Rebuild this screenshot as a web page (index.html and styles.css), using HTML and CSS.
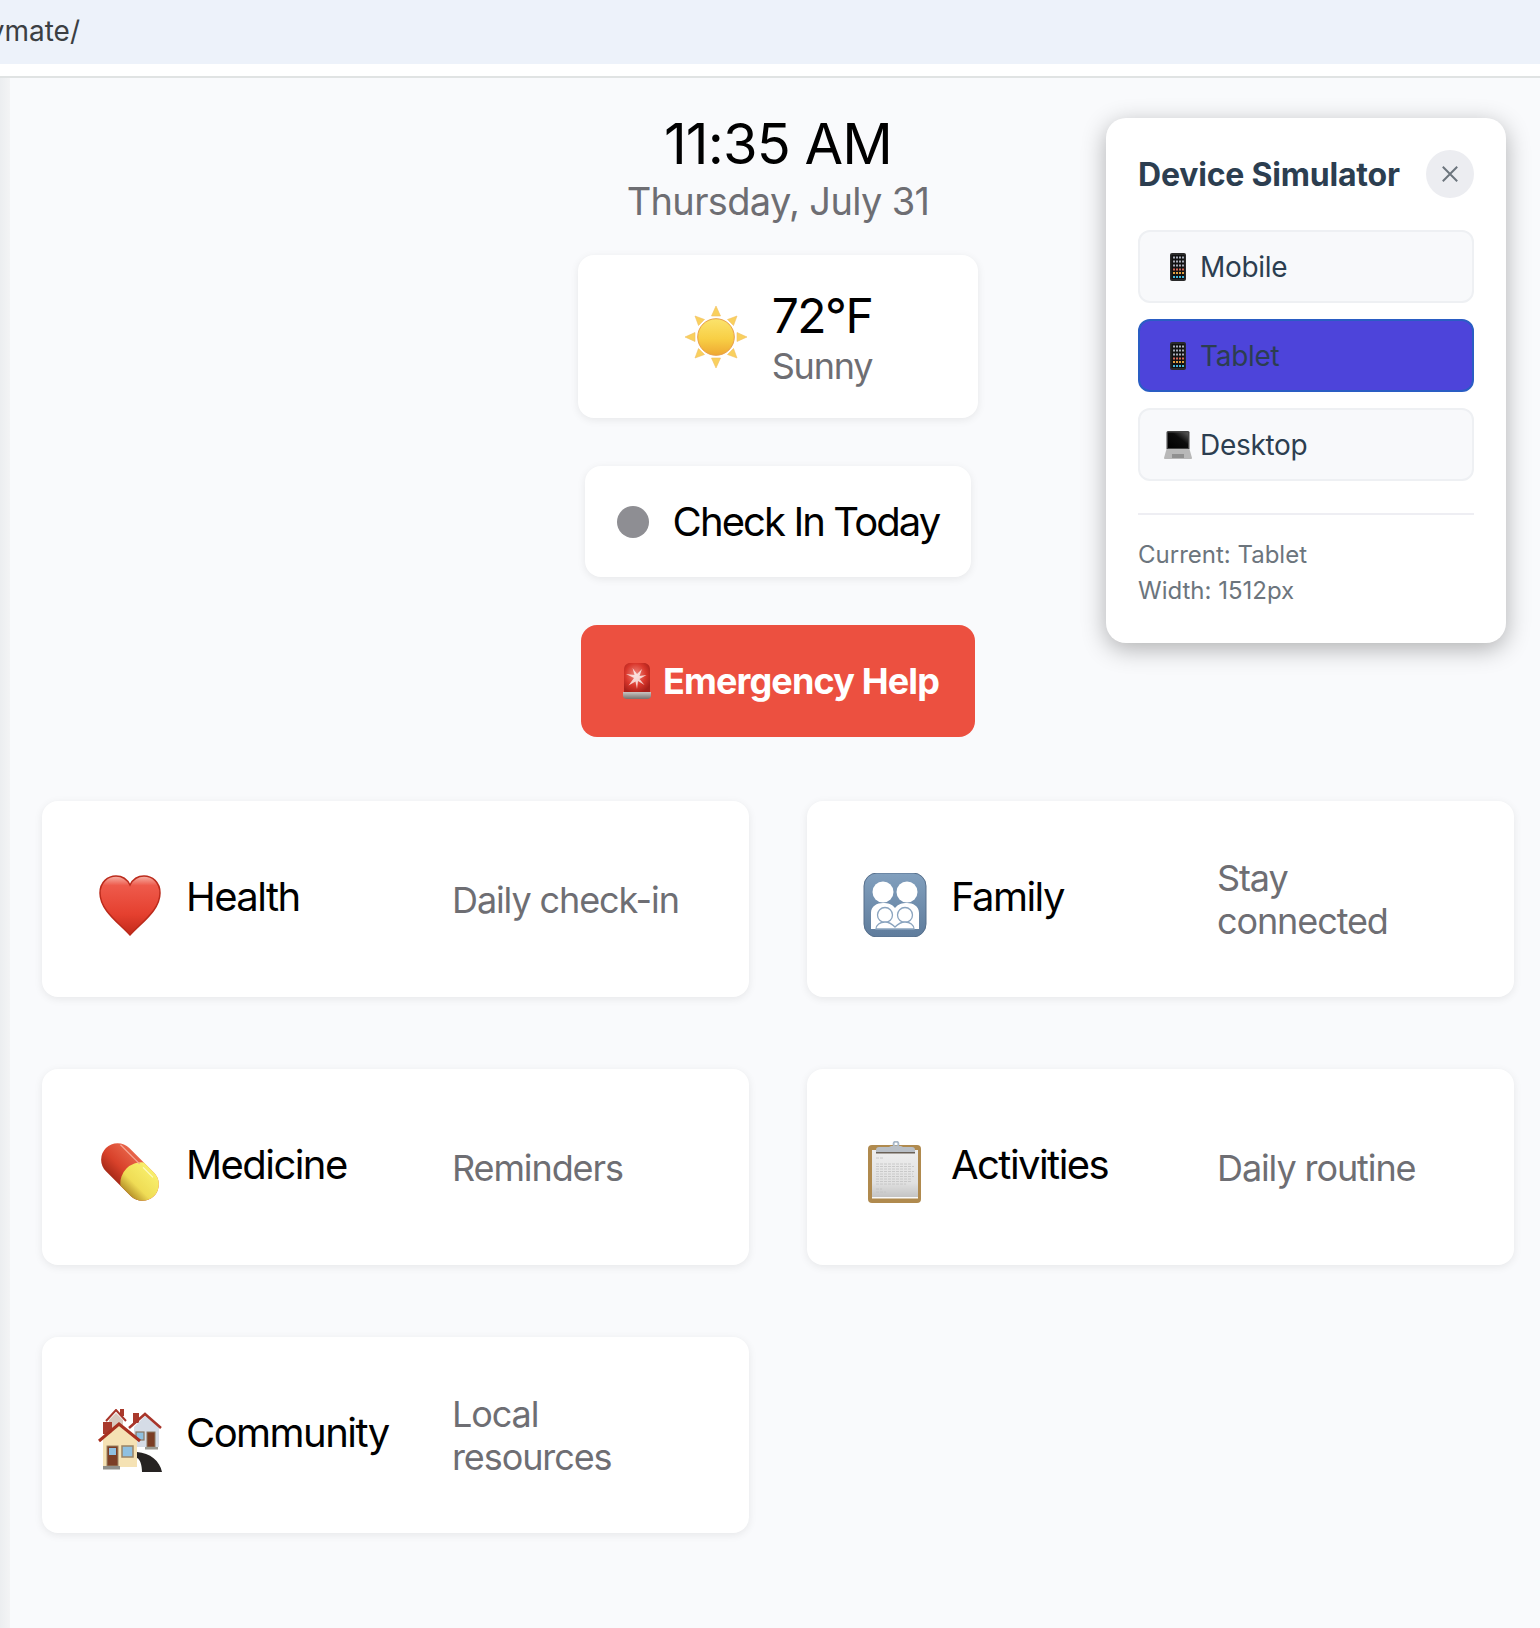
FILE: index.html
```html
<!DOCTYPE html>
<html lang="en">
<head>
  <meta charset="UTF-8" />
  <title>Buddymate</title>
  <link rel="stylesheet" href="styles.css">
</head>
<body>
  <div class="url-bar">
    <div class="url-clip"><span>buddymate/</span></div>
  </div>
  <div class="url-gap"></div>

  <div class="page">
    <div class="side-strip"></div>
    <main>
      <section class="top">
        <div class="time">11:35 AM</div>
        <div class="date">Thursday, July 31</div>

        <div class="weather">
          <svg class="sun" viewBox="0 0 64 64">
            <defs>
              <linearGradient id="sunFill" x1="0" y1="0" x2="0" y2="1">
                <stop offset="0" stop-color="#fbe36c"/>
                <stop offset=".55" stop-color="#f8cf45"/>
                <stop offset="1" stop-color="#eea832"/>
              </linearGradient>
            </defs>
            <g fill="#f9d05e" stroke="#f2bf62" stroke-width=".6">
              <path d="M32 1l4.500 10h-9z"/>
              <path d="M32 63l-4.500-10h9z"/>
              <path d="M1 32l10-4.500v9z"/>
              <path d="M63 32l-10 4.500v-9z"/>
              <path d="M11 11l9.500 3.500-6 6z"/>
              <path d="M53 11l-3.500 9.500-6-6z"/>
              <path d="M11 53l3.500-9.500 6 6z"/>
              <path d="M53 53l-9.500-3.500 6-6z"/>
            </g>
            <circle cx="32" cy="32" r="20" fill="#fff"/>
            <circle cx="32" cy="32" r="18.300" fill="url(#sunFill)" stroke="#e8a04a" stroke-width="1"/>
          </svg>
          <div class="weather-text">
            <div class="temp">72°F</div>
            <div class="sky">Sunny</div>
          </div>
        </div>

        <button class="checkin"><span class="dot"></span>Check In Today</button>

        <button class="emergency">
          <svg class="siren" viewBox="0 0 40 40">
            <defs>
              <radialGradient id="sirenFill" cx="45%" cy="40%" r="65%">
                <stop offset="0" stop-color="#f08a80"/>
                <stop offset=".6" stop-color="#d9362b"/>
                <stop offset="1" stop-color="#a8201a"/>
              </radialGradient>
              <linearGradient id="sirenBase" x1="0" y1="0" x2="0" y2="1">
                <stop offset="0" stop-color="#c9c5c2"/>
                <stop offset="1" stop-color="#77716e"/>
              </linearGradient>
            </defs>
            <path d="M7 31V9c0-5 3-7 6-7h14c3 0 6 2 6 7v22z" fill="url(#sirenFill)"/>
            <path d="M6 31h28v4c0 2-2 3-4 3H10c-2 0-4-1-4-3z" fill="url(#sirenBase)"/>
            <path d="M17 17l-8-4 8.500 1-2-7 4.500 6 5-5-2.500 7 7-1-7 4 5 6-6.500-4-1 8-1.500-7.500-7 4z" fill="#fff" opacity=".75"/>
          </svg>
          <span>Emergency Help</span>
        </button>
      </section>

      <section class="tiles">
        <a class="tile">
          <svg class="tile-icon" viewBox="0 0 64 64">
            <defs>
              <linearGradient id="heartFill" x1="0" y1="0" x2="0" y2="1">
                <stop offset="0" stop-color="#f6b3a8"/>
                <stop offset=".16" stop-color="#ee5a4b"/>
                <stop offset=".65" stop-color="#e5402f"/>
                <stop offset="1" stop-color="#c22a1a"/>
              </linearGradient>
            </defs>
            <path d="M32 62C20 49 2 37 2 20 2 9 10 3 18 3c6 0 11 3 14 9 3-6 8-9 14-9 8 0 16 6 16 17 0 17-18 29-30 42z" fill="url(#heartFill)" stroke="#bb2a1b" stroke-width="1.500"/>
          </svg>
          <span class="tile-name">Health</span>
          <span class="tile-sub">Daily check-in</span>
        </a>

        <a class="tile">
          <svg class="tile-icon" viewBox="0 0 64 64">
            <defs>
              <linearGradient id="famFill" x1="0" y1="0" x2="0" y2="1">
                <stop offset="0" stop-color="#82a0be"/>
                <stop offset="1" stop-color="#5f7c9c"/>
              </linearGradient>
            </defs>
            <rect x="1" y="0" width="62" height="64" rx="13" fill="url(#famFill)" stroke="#566f8b"/>
            <g fill="#fff">
              <circle cx="20" cy="19" r="10.500"/>
              <circle cx="44" cy="19" r="10.500"/>
              <path d="M8 56V40c0-7 6-10 12-10 5 0 9 1 12 5 3-4 7-5 12-5 6 0 12 3 12 10v16z"/>
            </g>
            <g fill="#fff" stroke="#8aa4bf" stroke-width="1.300">
              <circle cx="22" cy="42" r="7.500"/>
              <circle cx="42" cy="42" r="7.500"/>
              <path d="M13 56c0-4 4-7 9-7 4 0 7 2 10 5 3-3 6-5 10-5 5 0 9 3 9 7z"/>
            </g>
          </svg>
          <span class="tile-name">Family</span>
          <span class="tile-sub">Stay connected</span>
        </a>

        <a class="tile">
          <svg class="tile-icon" viewBox="0 0 64 64">
            <defs>
              <linearGradient id="pillRed" x1="0" y1="0" x2="0" y2="1">
                <stop offset="0" stop-color="#e8654a"/>
                <stop offset=".6" stop-color="#d8412a"/>
                <stop offset="1" stop-color="#a82a18"/>
              </linearGradient>
              <linearGradient id="pillYellow" x1="0" y1="0" x2="0" y2="1">
                <stop offset="0" stop-color="#f8ef6c"/>
                <stop offset=".65" stop-color="#efdc55"/>
                <stop offset="1" stop-color="#b8932a"/>
              </linearGradient>
            </defs>
            <g transform="rotate(45 32 31)">
              <rect x="-2" y="14.500" width="68" height="33" rx="16.500" fill="url(#pillRed)"/>
              <path d="M35 14.500h14.500a16.500 16.500 0 0 1 0 33H35a21 21 0 0 1 0-33z" fill="url(#pillYellow)"/>
              <path d="M6 18.500h27" stroke="#f6a798" stroke-width="1.200" fill="none"/>
              <path d="M38 18.500h14" stroke="#fdfbc8" stroke-width="1.200" fill="none"/>
            </g>
          </svg>
          <span class="tile-name">Medicine</span>
          <span class="tile-sub">Reminders</span>
        </a>

        <a class="tile">
          <svg class="tile-icon" viewBox="0 0 64 64">
            <defs>
              <linearGradient id="paper" x1="0" y1="0" x2="0" y2="1">
                <stop offset="0" stop-color="#eeeeee"/>
                <stop offset=".7" stop-color="#e0e0e0"/>
                <stop offset="1" stop-color="#c4c4c4"/>
              </linearGradient>
            </defs>
            <rect x="5" y="4" width="53" height="58" rx="4" fill="#b08a4e"/>
            <rect x="9" y="9" width="46" height="47" fill="url(#paper)"/>
            <rect x="9" y="56" width="46" height="1.500" fill="#fafafa"/>
            <g stroke="#c2c2c2" stroke-width=".8" stroke-dasharray="3 1" fill="none">
              <path d="M13 17h7M13 23h36M13 25.500h38M13 28h36M13 30.500h38M13 33h37M13 35.500h38M13 38h36M13 40.500h35M13 43h30M13 48h6M13 51h10"/>
            </g>
            <circle cx="33" cy="3" r="2.500" fill="none" stroke="#a9b8c8" stroke-width="1.800"/>
            <path d="M28 5h10l2 1h9c2 0 3 1 3 3v2H13V9c0-2 1-3 3-3h10z" fill="#b9bfc6"/>
            <rect x="13" y="11" width="39" height="1.500" fill="#6a6157"/>
          </svg>
          <span class="tile-name">Activities</span>
          <span class="tile-sub">Daily routine</span>
        </a>

        <a class="tile">
          <svg class="tile-icon" viewBox="0 0 64 64">
            <!-- back house -->
            <rect x="22" y="0" width="4" height="7" fill="#a93a2c"/>
            <path d="M11 11L18 4l7 7v9H11z" fill="#d8c8be"/>
            <path d="M8 12L18 1l10 11" fill="none" stroke="#a8352a" stroke-width="2"/>
            <!-- right house -->
            <rect x="35" y="4" width="6" height="10" fill="#a93a2c"/>
            <path d="M36 18L47 7l14 11v20H36z" fill="#d5dce6"/>
            <path d="M31 19L47 5l16 14" fill="none" stroke="#a8352a" stroke-width="2.500"/>
            <rect x="38" y="23" width="8" height="8" fill="#8fc0e0" stroke="#8b7862" stroke-width="1.200"/>
            <rect x="49" y="23" width="8" height="15" fill="#7b3e25" stroke="#8b7862" stroke-width="1"/>
            <rect x="47" y="38" width="13" height="2.500" fill="#9a9a92"/>
            <!-- road -->
            <path d="M39 43c13 1 23 9 25 20H44c0-7-2-13-5-14z" fill="#262322"/>
            <!-- front house -->
            <rect x="5" y="13" width="9" height="12" fill="#a93a2c"/>
            <path d="M5 30L21 17l18 13v28H5z" fill="#f5e2b4"/>
            <path d="M1 32L21 15l21 17" fill="none" stroke="#a8301f" stroke-width="3"/>
            <rect x="9" y="37" width="11" height="20" fill="#7b3e25" stroke="#9b8464" stroke-width="1"/>
            <rect x="11" y="39" width="7" height="7" fill="#8fc0e0"/>
            <rect x="24" y="37" width="11" height="11" fill="#8fc0e0" stroke="#9b8464" stroke-width="1.500"/>
            <rect x="5" y="57" width="17" height="3.500" fill="#8f8f8a"/>
          </svg>
          <span class="tile-name">Community</span>
          <span class="tile-sub">Local resources</span>
        </a>
      </section>
    </main>

    <aside class="simulator">
      <div class="sim-head">
        <h3>Device Simulator</h3>
        <button class="sim-close">
          <svg viewBox="0 0 20 20"><path d="M2 2l16 16M18 2L2 18" stroke="#6c757d" stroke-width="2.200" fill="none"/></svg>
        </button>
      </div>
      <div class="sim-list">
        <button class="sim-btn">
          <svg class="sim-icon" viewBox="0 0 28 28">
            <rect x="6" y="0" width="16" height="28" rx="2" fill="#2a2a2a"/>
            <rect x="7.500" y="2" width="13" height="24" fill="#111"/>
            <path d="M9 4.500h11M9 8.500h11M9 12.500h11" stroke="#a8acb8" stroke-width="2" stroke-dasharray="2 1"/>
            <path d="M9 16.500h11" stroke="#d86a5a" stroke-width="2" stroke-dasharray="2 1"/>
            <path d="M9 20h11" stroke="#e0a040" stroke-width="2" stroke-dasharray="2 1"/>
            <path d="M9 24h11" stroke="#46b8d8" stroke-width="2" stroke-dasharray="2 1"/>
          </svg>
          Mobile
        </button>
        <button class="sim-btn active">
          <svg class="sim-icon" viewBox="0 0 28 28">
            <rect x="6" y="0" width="16" height="28" rx="2" fill="#2a2a2a"/>
            <rect x="7.500" y="2" width="13" height="24" fill="#111"/>
            <path d="M9 4.500h11M9 8.500h11M9 12.500h11" stroke="#a8acb8" stroke-width="2" stroke-dasharray="2 1"/>
            <path d="M9 16.500h11" stroke="#d86a5a" stroke-width="2" stroke-dasharray="2 1"/>
            <path d="M9 20h11" stroke="#e0a040" stroke-width="2" stroke-dasharray="2 1"/>
            <path d="M9 24h11" stroke="#46b8d8" stroke-width="2" stroke-dasharray="2 1"/>
          </svg>
          Tablet
        </button>
        <button class="sim-btn">
          <svg class="sim-icon" viewBox="0 0 28 28">
            <defs>
              <linearGradient id="lapScreen" x1="0" y1="1" x2="1" y2="0">
                <stop offset="0" stop-color="#000"/>
                <stop offset=".6" stop-color="#0c0c0c"/>
                <stop offset="1" stop-color="#5a5a5a"/>
              </linearGradient>
            </defs>
            <path d="M4 0h20c1 0 1.500 1 1.500 1.500V18h-23V1.500C2.500 1 3 0 4 0z" fill="#444"/>
            <path d="M4 1.500h20V17H4z" fill="url(#lapScreen)"/>
            <path d="M2.500 18h23L28 27c0 .5-.5 1-1 1H1c-.5 0-1-.5-1-1z" fill="#b8b8b8"/>
            <rect x="8" y="23" width="12" height="4" fill="#909090"/>
          </svg>
          Desktop
        </button>
      </div>
      <div class="sim-info">
        <div>Current: Tablet</div>
        <div>Width: 1512px</div>
      </div>
    </aside>
  </div>
</body>
</html>
```

FILE: styles.css
```css
* { box-sizing: border-box; }
:root {
  --text-grey: #6e6e73;
  --card-shadow: 0 2px 8px rgba(0,0,0,0.08);
}
html, body { height: 100%; }
body {
  margin: 0; overflow: hidden;
  font-family: Inter, "Liberation Sans", sans-serif;
  background: #f9fafc; color: #000;
}
button { font-family: inherit; cursor: pointer; }

/* browser chrome left over at the top */
.url-bar {
  height: 64px; background: #edf2fa; padding-bottom: 2px;
  display: flex; align-items: center;
}
.url-clip {
  width: 80px; overflow: hidden; display: flex; justify-content: flex-end;
  white-space: nowrap; color: #3c3f43; font-size: 28px;
}
.url-gap {
  height: 14px; background: #fff;
  border-bottom: 2px solid #e0e3e3;
}

.page { position: relative; display: flex; height: 1550px; }
.side-strip {
  flex: 0 0 10px;
  background: linear-gradient(to right, #eceef0, #f3f4f5);
}
main { flex: 0 0 1536px; padding: 33px 32px 32px; }

.top { display: flex; flex-direction: column; align-items: center; }
.time { font-size: 56px; line-height: 66px; letter-spacing: -0.9px; }
.date { font-size: 38px; line-height: 48px; letter-spacing: -0.65px; color: var(--text-grey); margin-bottom: 30px; }

.weather {
  width: 400px; height: 163px; background: #fff; border-radius: 16px;
  box-shadow: var(--card-shadow);
  display: flex; align-items: center; justify-content: center; gap: 24px;
}
.sun { width: 64px; height: 64px; }
.temp { font-size: 48px; line-height: 56px; letter-spacing: -1.5px; padding-top: 2px; }
.sky { font-size: 36px; line-height: 44px; letter-spacing: -1.2px; color: var(--text-grey); }

.checkin {
  margin-top: 48px; height: 111px; padding: 0 32px;
  background: #fff; border: none; border-radius: 16px;
  box-shadow: var(--card-shadow);
  display: flex; align-items: center; gap: 24px;
  font-size: 40px; letter-spacing: -1.9px; color: #000;
}
.dot { width: 32px; height: 32px; border-radius: 50%; background: #8e8e93; }

.emergency {
  margin-top: 48px; width: 394px; height: 112px;
  background: #ec5040; color: #fff; border: none; border-radius: 16px;
  display: flex; align-items: center; justify-content: center; gap: 6px;
  font-size: 36px; font-weight: 700; letter-spacing: -0.85px;
}
.siren { width: 40px; height: 40px; }

.tiles {
  margin-top: 64px;
  display: grid; grid-template-columns: 1fr 1fr; column-gap: 58px; row-gap: 72.500px;
  grid-auto-rows: 195.500px;
}
.tile {
  background: #fff; border-radius: 16px; box-shadow: var(--card-shadow);
  padding: 0 56px;
  display: grid; grid-template-columns: 64px 242px 1fr; column-gap: 24px; align-items: center;
}
.tile-icon { width: 64px; height: 64px; margin-top: 12px; }
.tile-name { font-size: 40px; line-height: 48px; letter-spacing: -1.55px; margin-bottom: 3px; }
.tile-sub { font-size: 36px; line-height: 43px; letter-spacing: -1.1px; color: var(--text-grey); margin-top: 3px; }

/* floating panel */
.simulator {
  position: absolute; top: 40px; left: 1106px; width: 400px; height: 525px;
  background: #fff; border-radius: 20px; padding: 32px;
  box-shadow: 0 6px 24px rgba(0,0,0,0.3);
}
.sim-head { display: flex; align-items: center; justify-content: space-between; height: 48px; }
.sim-head h3 { margin: 0; font-size: 32px; font-weight: 700; letter-spacing: -0.2px; color: #2c3e50; }
.sim-close {
  width: 48px; height: 48px; border: none; border-radius: 50%; background: #ecedf1;
  display: flex; align-items: center; justify-content: center; padding: 0;
}
.sim-close svg { width: 18px; height: 18px; }
.sim-list { margin-top: 32px; display: flex; flex-direction: column; gap: 16px; }
.sim-btn {
  height: 73px; padding: 0 24px;
  background: #f8f9fb; border: 2px solid #eef0f3; border-radius: 12px;
  display: flex; align-items: center; gap: 8px;
  font-size: 28px; letter-spacing: -0.3px; color: #2c3e50; text-align: left;
}
.sim-btn.active { background: #4d44da; border-color: #2a5dc4; }
.sim-icon { width: 28px; height: 28px; }
.sim-info {
  margin-top: 32px; padding-top: 22px; border-top: 2px solid #eeeef3;
  font-size: 24px; line-height: 36px; color: #6c757d;
}
```
